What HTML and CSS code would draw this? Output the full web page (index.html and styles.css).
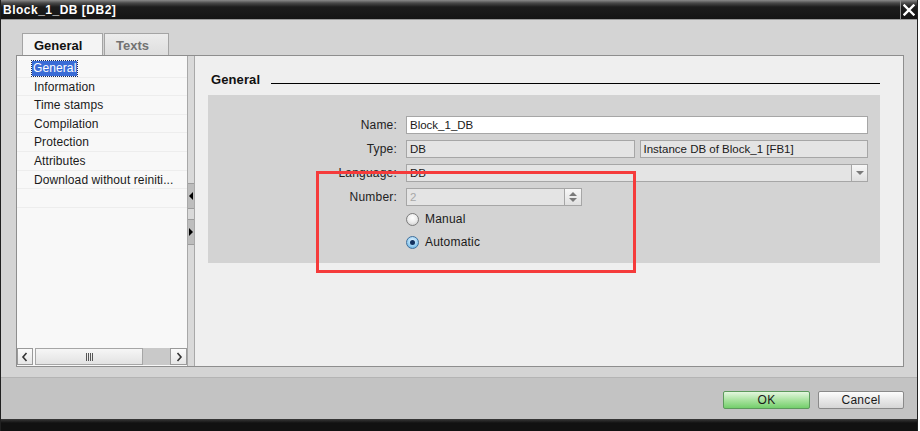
FILE: index.html
```html
<!DOCTYPE html>
<html lang="en">
<head>
    <meta charset="UTF-8">
    <meta name="viewport" content="width=device-width, initial-scale=1.0">
    <title>Block_1_DB [DB2]</title>
    <link rel="stylesheet" href="styles.css">
</head>
<body>
    <div class="dialog">
        <div class="titlebar">
            <span class="title">Block_1_DB [DB2]</span>
            <span class="close">
                <svg width="12" height="12" viewBox="0 0 12 12">
                    <path d="M1.5 1.5 L10.5 10.5 M10.5 1.5 L1.5 10.5" stroke="#fff" stroke-width="2.4" stroke-linecap="square"/>
                </svg>
            </span>
        </div>

        <div class="main">
            <div class="tabs">
                <div class="tab active">General</div>
                <div class="tab">Texts</div>
            </div>

            <div class="panel">
                <div class="nav">
                    <ul class="tree">
                        <li><span class="selected">General</span></li>
                        <li>Information</li>
                        <li>Time stamps</li>
                        <li>Compilation</li>
                        <li>Protection</li>
                        <li>Attributes</li>
                        <li>Download without reiniti...</li>
                        <li></li>
                    </ul>
                    <div class="hscroll">
                        <div class="sb-btn">
                            <svg width="8" height="10" viewBox="0 0 8 10"><path d="M5.5 1 L2 5 L5.5 9" fill="none" stroke="#333" stroke-width="1.6"/></svg>
                        </div>
                        <div class="sb-thumb"><span class="grip"></span></div>
                        <div class="sb-track"></div>
                        <div class="sb-btn">
                            <svg width="8" height="10" viewBox="0 0 8 10"><path d="M2.5 1 L6 5 L2.5 9" fill="none" stroke="#333" stroke-width="1.6"/></svg>
                        </div>
                    </div>
                </div>

                <div class="splitter">
                    <div class="split-btn"><span class="arrow-left"></span></div>
                    <div class="split-btn"><span class="arrow-right"></span></div>
                </div>

                <div class="content">
                    <div class="section-head">
                        <span class="section-title">General</span>
                        <span class="rule"></span>
                    </div>

                    <div class="group">
                        <label class="field-label">Name:</label>
                        <div class="field"><span class="input">Block_1_DB</span></div>

                        <label class="field-label">Type:</label>
                        <div class="field split">
                            <span class="input readonly">DB</span>
                            <span class="input readonly">Instance DB of Block_1 [FB1]</span>
                        </div>

                        <label class="field-label">Language:</label>
                        <div class="field">
                            <span class="input readonly combo">DB<span class="combo-btn"><span class="arrow-down"></span></span></span>
                        </div>

                        <label class="field-label">Number:</label>
                        <div class="field">
                            <span class="input readonly spin">2<span class="spin-btn"><span class="arrow-up"></span><span class="arrow-down"></span></span></span>
                        </div>

                        <span></span>
                        <div class="radios">
                            <div class="radio-row"><span class="radio"></span>Manual</div>
                            <div class="radio-row"><span class="radio checked"></span>Automatic</div>
                        </div>
                    </div>
                </div>
            </div>
        </div>

        <div class="footer">
            <button class="btn ok">OK</button>
            <button class="btn">Cancel</button>
        </div>
        <div class="statusbar"></div>

        <div class="highlight-box"></div>
    </div>
</body>
</html>
```

FILE: styles.css
```css
body {
    margin: 0;
    background-color: #ffffff;
    font-family: "Liberation Sans", Arial, sans-serif;
    font-size: 12px;
    color: #1a1a1a;
    overflow: hidden;
}

.dialog {
    position: relative;
    width: 918px;
    height: 431px;
    box-sizing: border-box;
    border-left: 1px solid #202020;
    border-right: 1px solid #202020;
    display: flex;
    flex-direction: column;
}

/* title bar */
.titlebar {
    height: 20px;
    flex: none;
    display: flex;
    align-items: center;
    justify-content: space-between;
    background: linear-gradient(to bottom, #8a8a8a 0px, #4a4a4a 3px, #1c1c1c 7px, #141414 100%);
    border-bottom: 1px solid #9a9a9a;
    box-sizing: border-box;
}

.title {
    color: #ffffff;
    font-weight: bold;
    font-size: 12px;
    padding-left: 2px;
    letter-spacing: 0.5px;
}

.close {
    width: 16px;
    height: 19px;
    display: flex;
    align-items: center;
    justify-content: center;
    border-left: 1px solid #8c8c8c;
}

/* body */
.main {
    height: 357px;
    flex: none;
    background-color: #d4d4d4;
    padding: 13px 13px 10px 15px;
    box-sizing: border-box;
    display: flex;
    flex-direction: column;
}

.tabs {
    display: flex;
    padding-left: 6px;
    height: 22px;
    gap: 1px;
}

.tab {
    height: 22px;
    box-sizing: border-box;
    border: 1px solid #a4a4a4;
    border-bottom: none;
    padding: 4px 0 0 11px;
    font-size: 13px;
    font-weight: bold;
    color: #727272;
    background: linear-gradient(to bottom, #ececec, #dedede);
    width: 65px;
}

.tab.active {
    width: 81px;
    color: #111111;
    background: #f4f4f4;
}

.panel {
    flex: 1;
    display: flex;
    border: 1px solid #8e8e8e;
    background-color: #efefef;
}

/* tree on the left */
.nav {
    width: 170px;
    flex: none;
    display: flex;
    flex-direction: column;
    background-color: #f8f8f8;
}

.tree {
    flex: 1;
    list-style: none;
    margin: 0;
    padding: 3px 0 0 0;
}

.tree li {
    height: 18.6px;
    box-sizing: border-box;
    line-height: 18px;
    padding-left: 17px;
    border-bottom: 1px solid #ededed;
    white-space: nowrap;
    letter-spacing: 0.1px;
}

.tree .selected {
    display: inline-block;
    margin-left: -2px;
    padding: 0 1px;
    line-height: 15px;
    background-color: #3a6cd6;
    color: #ffffff;
    outline: 1px dotted #1b2a55;
}

.hscroll {
    height: 18px;
    display: flex;
    background-color: #f8f8f8;
}

.sb-btn {
    width: 16px;
    height: 17px;
    box-sizing: border-box;
    border: 1px solid #9a9a9a;
    background: linear-gradient(to bottom, #fbfbfb, #e6e6e6);
    display: flex;
    align-items: center;
    justify-content: center;
}

.sb-btn:last-child {
    width: 17px;
}

.sb-thumb {
    width: 108px;
    height: 17px;
    margin-left: 2px;
    box-sizing: border-box;
    border: 1px solid #a6a6a6;
    background: linear-gradient(to bottom, #f6f6f6, #e2e2e2);
    display: flex;
    align-items: center;
    justify-content: center;
}

.grip {
    width: 7px;
    height: 8px;
    background: repeating-linear-gradient(to right, #555 0px, #555 1px, transparent 1px, transparent 2px);
}

.sb-track {
    flex: 1;
    height: 17px;
    background-color: #c9c9c9;
}

/* splitter between tree and page */
.splitter {
    width: 6px;
    flex: none;
    border-left: 1px solid #a8a8a8;
    border-right: 1px solid #a8a8a8;
    background-color: #d9d9d9;
    display: flex;
    flex-direction: column;
    gap: 10px;
    padding-top: 127px;
    box-sizing: content-box;
}

.split-btn {
    height: 24px;
    background-color: #bdbdbd;
    border-top: 1px solid #9c9c9c;
    border-bottom: 1px solid #9c9c9c;
    display: flex;
    align-items: center;
    justify-content: center;
}

.arrow-left {
    width: 0;
    height: 0;
    border-top: 4px solid transparent;
    border-bottom: 4px solid transparent;
    border-right: 4px solid #000000;
}

.arrow-right {
    width: 0;
    height: 0;
    border-top: 4px solid transparent;
    border-bottom: 4px solid transparent;
    border-left: 4px solid #000000;
}

/* property page */
.content {
    flex: 1;
    padding-top: 14px;
    background-color: #efefef;
}

.section-head {
    display: flex;
    align-items: flex-end;
    height: 18px;
    margin: 0 23px 0 16px;
}

.section-title {
    font-size: 13px;
    font-weight: bold;
    color: #111111;
    line-height: 16px;
    letter-spacing: 0.1px;
}

.rule {
    flex: 1;
    height: 1px;
    margin: 0 0 4px 11px;
    background-color: #000000;
}

.group {
    margin: 7px 23px 0 13px;
    height: 168px;
    box-sizing: border-box;
    background-color: #d3d3d3;
    padding: 21px 12px 0 0;
    display: grid;
    grid-template-columns: 189px 1fr;
    grid-auto-rows: min-content;
    column-gap: 9px;
    row-gap: 6px;
}

.field-label {
    text-align: right;
    line-height: 18px;
    color: #222222;
    letter-spacing: 0.2px;
}

.field {
    display: flex;
    gap: 5px;
}

.split .input {
    flex: 1;
}

.input {
    position: relative;
    height: 18px;
    flex: 1;
    box-sizing: border-box;
    border: 1px solid #a6a6a6;
    background-color: #ffffff;
    padding-left: 3px;
    line-height: 16px;
    font-size: 11.5px;
    color: #1a1a1a;
}

.input.readonly {
    background-color: #e4e4e4;
}

.input.spin {
    flex: none;
    width: 176px;
    color: #a8a8a8;
}

.combo-btn,
.spin-btn {
    position: absolute;
    right: 0;
    top: 0;
    width: 15px;
    height: 16px;
    border-left: 1px solid #a6a6a6;
    background: linear-gradient(to bottom, #f7f7f7, #e0e0e0);
    display: flex;
    flex-direction: column;
    align-items: center;
    justify-content: center;
    gap: 2px;
}

.spin-btn {
    width: 16px;
}

.arrow-down {
    width: 0;
    height: 0;
    border-left: 4px solid transparent;
    border-right: 4px solid transparent;
    border-top: 4px solid #7a7a7a;
}

.arrow-up {
    width: 0;
    height: 0;
    border-left: 4px solid transparent;
    border-right: 4px solid transparent;
    border-bottom: 4px solid #7a7a7a;
}

.radios {
    display: flex;
    flex-direction: column;
    gap: 9px;
}

.radio-row {
    height: 14px;
    display: flex;
    align-items: center;
    gap: 6px;
    line-height: 14px;
    letter-spacing: 0.2px;
}

.radio {
    width: 13px;
    height: 13px;
    box-sizing: border-box;
    border-radius: 50%;
    border: 1px solid #7c7c7c;
    background: radial-gradient(circle at 50% 35%, #ffffff 0%, #ececec 50%, #c4c4c4 100%);
    display: flex;
    align-items: center;
    justify-content: center;
}

.radio.checked {
    border-color: #3f6f9c;
    background: radial-gradient(circle at 50% 35%, #e6f4ff 0%, #9bd0f2 55%, #4fa3d8 100%);
}

.radio.checked::after {
    content: "";
    width: 5px;
    height: 5px;
    border-radius: 50%;
    background-color: #12305e;
}

/* buttons */
.footer {
    height: 42px;
    flex: none;
    background-color: #c3c3c3;
    border-top: 1px solid #b4b4b4;
    box-sizing: border-box;
    display: flex;
    justify-content: flex-end;
    align-items: flex-start;
    gap: 8px;
    padding: 13px 13px 0 0;
}

.btn {
    width: 86px;
    height: 18px;
    padding: 0;
    font-family: "Liberation Sans", Arial, sans-serif;
    font-size: 12px;
    color: #1a1a1a;
    border: 1px solid #8a8a8a;
    border-radius: 2px;
    background: linear-gradient(to bottom, #fdfdfd, #e8e8e8 50%, #d6d6d6);
    letter-spacing: 0.3px;
}

.btn.ok {
    width: 87px;
    border-color: #5c9a5c;
    background: linear-gradient(to bottom, #e4f7df, #a9e3a0 50%, #74cf6c);
}

.statusbar {
    flex: 1;
    background: linear-gradient(to bottom, #3a3a3a, #111111 4px);
}

/* red marker drawn over the number settings */
.highlight-box {
    position: absolute;
    left: 315px;
    top: 171px;
    width: 320px;
    height: 102px;
    box-sizing: border-box;
    border: 3px solid #f53b3b;
}
```
